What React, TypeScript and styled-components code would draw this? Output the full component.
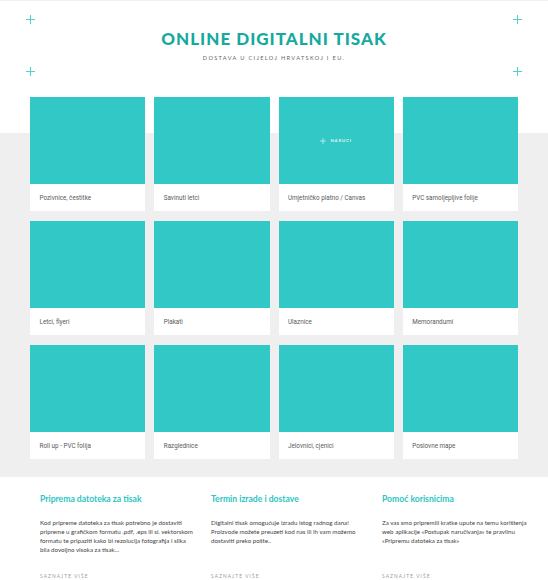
import React from "react";
import styled, { createGlobalStyle } from "styled-components";

const GlobalStyle = createGlobalStyle`
  html, body { margin: 0; padding: 0; background: #ffffff; }
  body { font-family: "Lato", "Liberation Sans", sans-serif; -webkit-font-smoothing: antialiased; }
  * { box-sizing: border-box; }
`;

const Page = styled.div`
  width: 548px;
  border-top: 1px solid #f1f1f1;
`;

const Header = styled.header`
  height: 96px;
  padding: 14px 26px 0;
  display: flex;
  flex-direction: column;
`;

const CornerRow = styled.div`
  display: flex;
  justify-content: space-between;
  height: 9px;
`;

const TitleBlock = styled.div`
  text-align: center;
  margin: 5px 0 4px;
`;

const Title = styled.h1`
  margin: 0;
  font-family: "Lato", sans-serif;
  font-weight: 900;
  font-size: 17px;
  line-height: 20px;
  letter-spacing: 1px;
  color: #16a9a0;
`;

const Subtitle = styled.p`
  margin: 4px 0 0;
  font-family: "Lato", sans-serif;
  font-size: 5.6px;
  line-height: 10px;
  letter-spacing: 1.35px;
  color: #666;
`;

const Products = styled.section`
  background: linear-gradient(to bottom, #ffffff 36px, #efefef 36px);
  padding: 0 30px 18px;
`;

const Grid = styled.div`
  display: grid;
  grid-template-columns: repeat(4, 1fr);
  column-gap: 9px;
  row-gap: 10px;
`;

const Card = styled.div`
  display: flex;
  flex-direction: column;
  background: #fff;
`;

const CardImage = styled.div`
  height: 87px;
  background: #31c8c6;
  display: flex;
  align-items: center;
  justify-content: center;
`;

const CardLabel = styled.div`
  height: 27px;
  padding: 1px 0 0 9.5px;
  font-family: "Roboto", "Liberation Sans", sans-serif;
  font-size: 6.3px;
  line-height: 27px;
  color: #5a5a5a;
`;

const OrderTag = styled.span`
  display: flex;
  align-items: center;
  gap: 4px;
  font-family: "Lato", sans-serif;
  font-weight: 700;
  font-size: 4.4px;
  letter-spacing: 0.8px;
  color: rgba(255, 255, 255, 0.85);
`;

const Footer = styled.footer`
  padding: 16px 40px 0;
  display: grid;
  grid-template-columns: repeat(3, 143px);
  column-gap: 28px;
`;

const InfoColumn = styled.div`
  display: flex;
  flex-direction: column;
`;

const InfoTitle = styled.h3`
  margin: 0;
  font-family: "Lato", sans-serif;
  font-weight: 700;
  font-size: 8.6px;
  line-height: 12px;
  color: #2cc5c3;
  white-space: nowrap;
`;

const InfoText = styled.p`
  margin: 12.5px 0 0;
  height: 37px;
  font-family: "Lato", sans-serif;
  font-size: 6.2px;
  line-height: 9.2px;
  color: #444;
  white-space: nowrap;
`;

const MoreLink = styled.a`
  margin-top: 17px;
  font-family: "Lato", sans-serif;
  font-size: 4.8px;
  line-height: 8px;
  letter-spacing: 1.1px;
  color: #999;
  text-decoration: none;
`;

const Cross = ({ size = 9, color = "#4fd2cd" }: { size?: number; color?: string }) => (
  <svg width={size} height={size} viewBox="0 0 9 9" aria-hidden>
    <line x1="4.5" y1="0" x2="4.5" y2="9" stroke={color} strokeWidth="1" />
    <line x1="0" y1="4.5" x2="9" y2="4.5" stroke={color} strokeWidth="1" />
  </svg>
);

const products = [
  "Pozivnice, čestitke",
  "Savinuti letci",
  "Umjetničko platno / Canvas",
  "PVC samoljepljive folije",
  "Letci, flyeri",
  "Plakati",
  "Ulaznice",
  "Memorandumi",
  "Roll up - PVC folija",
  "Razglednice",
  "Jelovnici, cjenici",
  "Poslovne mape",
];

const info = [
  {
    title: "Priprema datoteka za tisak",
    lines: [
      "Kod pripreme datoteka za tisak potrebno je dostaviti",
      "pripreme u grafičkom formatu .pdf, .eps ili sl. vektorskom",
      "formatu te pripaziti kako bi rezolucija fotografija i slika",
      "bila dovoljno visoka za tisak...",
    ],
  },
  {
    title: "Termin izrade i dostave",
    lines: [
      "Digitalni tisak omogućuje izradu istog radnog dana!",
      "Proizvode možete preuzeti kod nas ili ih vam možemo",
      "dostaviti preko pošte..",
    ],
  },
  {
    title: "Pomoć korisnicima",
    lines: [
      "Za vas smo pripremili kratke upute na temu korištenja",
      "web aplikacije «Postupak naručivanja» te pravilnu",
      "«Pripremu datoteka za tisak»",
    ],
  },
];

export default function App() {
  return (
    <>
      <GlobalStyle />
      <Page>
        <Header>
          <CornerRow>
            <Cross />
            <Cross />
          </CornerRow>
          <TitleBlock>
            <Title>ONLINE DIGITALNI TISAK</Title>
            <Subtitle>DOSTAVA U CIJELOJ HRVATSKOJ I EU.</Subtitle>
          </TitleBlock>
          <CornerRow>
            <Cross />
            <Cross />
          </CornerRow>
        </Header>
        <Products>
          <Grid>
            {products.map((p, i) => (
              <Card key={p}>
                <CardImage>
                  {i === 2 && (
                    <OrderTag>
                      <Cross size={6} color="rgba(255,255,255,0.85)" />
                      NARUČI
                    </OrderTag>
                  )}
                </CardImage>
                <CardLabel>{p}</CardLabel>
              </Card>
            ))}
          </Grid>
        </Products>
        <Footer>
          {info.map((c) => (
            <InfoColumn key={c.title}>
              <InfoTitle>{c.title}</InfoTitle>
              <InfoText>
                {c.lines.map((l, i) => (
                  <React.Fragment key={i}>
                    {l}
                    {i < c.lines.length - 1 && <br />}
                  </React.Fragment>
                ))}
              </InfoText>
              <MoreLink href="#">SAZNAJTE VIŠE</MoreLink>
            </InfoColumn>
          ))}
        </Footer>
      </Page>
    </>
  );
}
